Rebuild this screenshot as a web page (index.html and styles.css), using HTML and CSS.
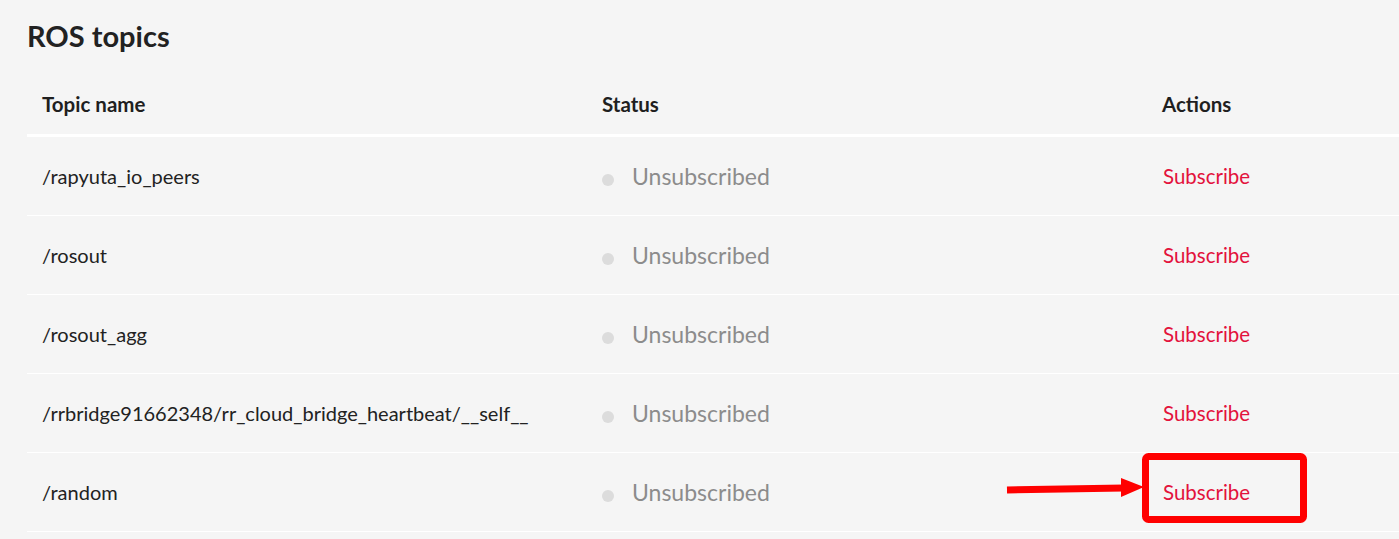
FILE: index.html
```html
<!DOCTYPE html>
<html lang="en">
<head>
<meta charset="utf-8">
<title>ROS topics</title>
<link rel="stylesheet" href="styles.css">
</head>
<body>
<main class="page">
  <h2 class="title">ROS topics</h2>
  <table class="topics">
    <colgroup>
      <col class="col-name">
      <col class="col-status">
      <col class="col-actions">
    </colgroup>
    <thead>
      <tr>
        <th>Topic name</th>
        <th>Status</th>
        <th>Actions</th>
      </tr>
    </thead>
    <tbody>
      <tr>
        <td class="name">/rapyuta_io_peers</td>
        <td class="status"><span class="dot"></span>Unsubscribed</td>
        <td class="action"><a href="#">Subscribe</a></td>
      </tr>
      <tr>
        <td class="name">/rosout</td>
        <td class="status"><span class="dot"></span>Unsubscribed</td>
        <td class="action"><a href="#">Subscribe</a></td>
      </tr>
      <tr>
        <td class="name">/rosout_agg</td>
        <td class="status"><span class="dot"></span>Unsubscribed</td>
        <td class="action"><a href="#">Subscribe</a></td>
      </tr>
      <tr>
        <td class="name">/rrbridge91662348/rr_cloud_bridge_heartbeat/__self__</td>
        <td class="status"><span class="dot"></span>Unsubscribed</td>
        <td class="action"><a href="#">Subscribe</a></td>
      </tr>
      <tr>
        <td class="name">/random</td>
        <td class="status"><span class="dot"></span>Unsubscribed</td>
        <td class="action"><a href="#">Subscribe</a></td>
      </tr>
    </tbody>
  </table>
</main>
<svg class="annotation" width="1399" height="539" viewBox="0 0 1399 539" aria-hidden="true">
  <line x1="1007" y1="490" x2="1124" y2="488" stroke="#ff0000" stroke-width="7"/>
  <polygon points="1121,478 1144,487 1121,497" fill="#ff0000"/>
  <rect x="1145.5" y="456.5" width="158" height="63" rx="3" fill="none" stroke="#ff0000" stroke-width="7"/>
</svg>
</body>
</html>
```

FILE: styles.css
```css
html, body {
  margin: 0;
  padding: 0;
  background: #f5f5f5;
}

body {
  font-family: "Lato", "Liberation Sans", sans-serif;
  color: #222;
  overflow: hidden;
}

.page {
  padding: 18px 0 0 27px;
}

.title {
  margin: 0;
  font-size: 29px;
  line-height: 36px;
  font-weight: 700;
  color: #222;
}

.topics {
  width: 100%;
  border-collapse: collapse;
  table-layout: fixed;
  margin-top: 20px;
}

.col-name { width: 560px; }
.col-status { width: 560px; }

.topics th {
  text-align: left;
  font-size: 20.5px;
  font-weight: 700;
  color: #1f1f1f;
  padding: 0 15px;
  height: 60px;
  vertical-align: middle;
  border-bottom: 3px solid #ffffff;
}

.topics td {
  height: 78px;
  padding: 0 15px;
  vertical-align: middle;
  border-bottom: 1px solid #ffffff;
  font-size: 20px;
}

.name {
  color: #222;
}

.topics td.status {
  color: #8c8c8c;
  font-size: 23px;
}

.dot {
  display: inline-block;
  width: 12px;
  height: 12px;
  border-radius: 50%;
  background: #dcdcdc;
  margin-right: 18px;
  vertical-align: -1px;
}

.topics td.action {
  font-size: 20.5px;
  padding-left: 16px;
}

.action a {
  color: #e3123c;
  text-decoration: none;
}

.annotation {
  position: absolute;
  left: 0;
  top: 0;
  pointer-events: none;
}
```
